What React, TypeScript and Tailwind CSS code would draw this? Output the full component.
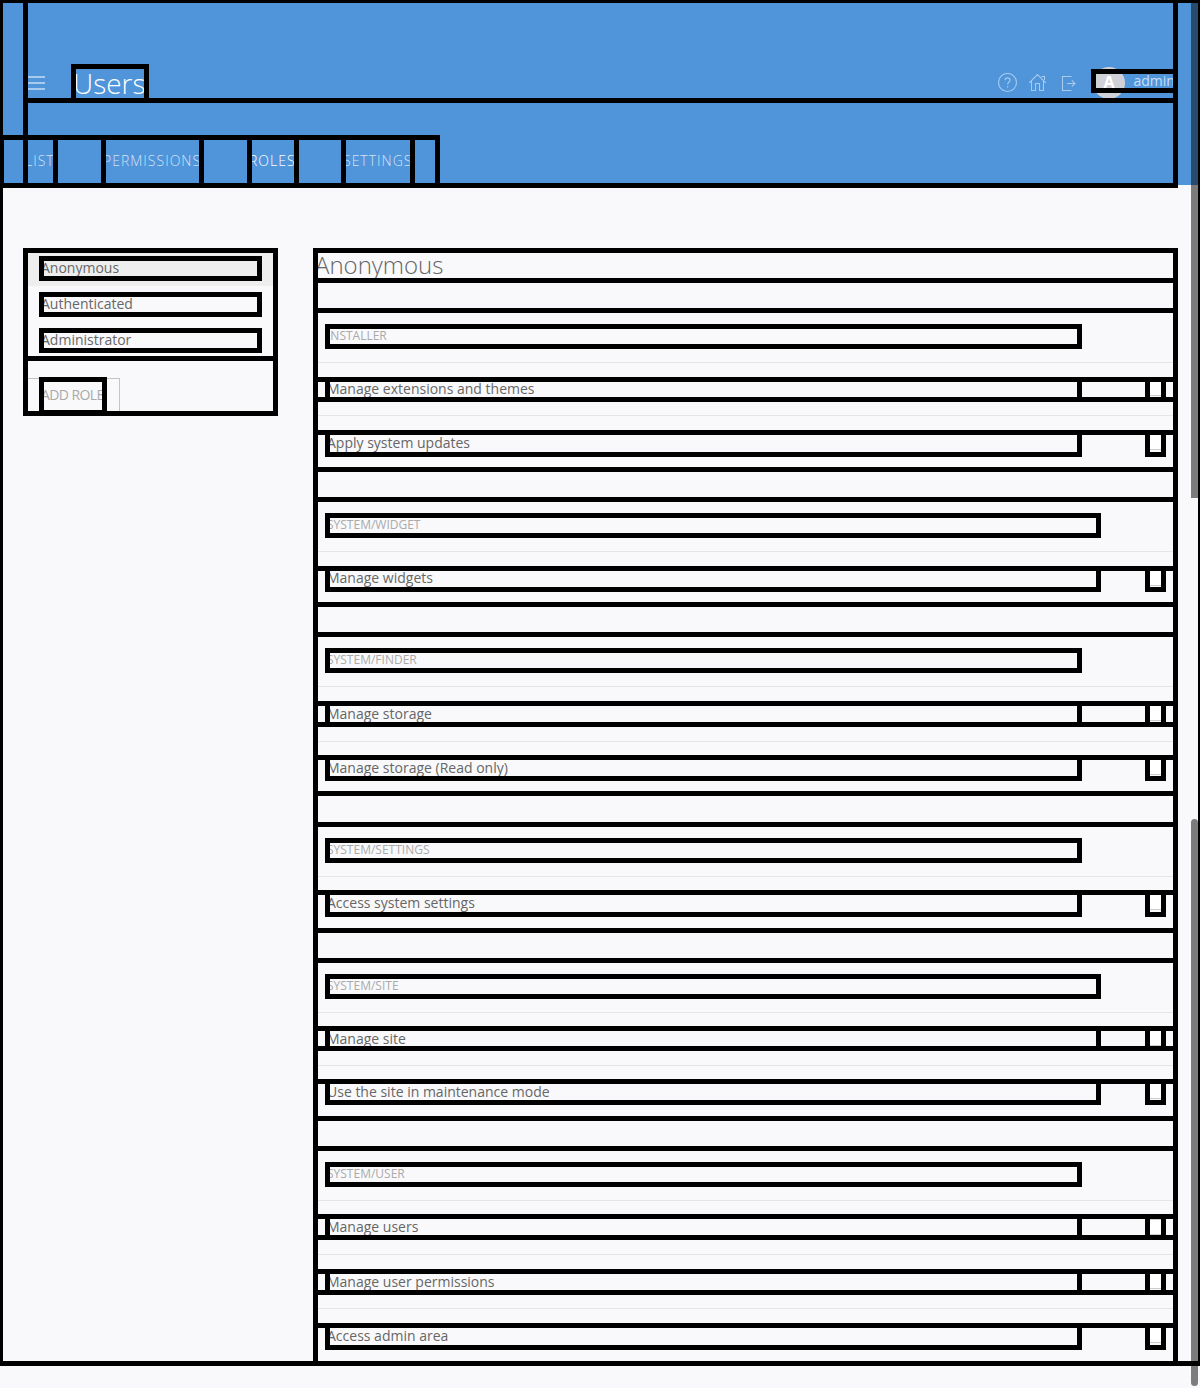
import React from "react";

type Row = { label: string; cls: string; box: string };
type Section = { title: string; head: string; rows: Row[]; gap: string };

const SECTIONS: Section[] = [
  {
    title: "INSTALLER",
    head: "h-[52px]",
    gap: "h-[30px]",
    rows: [
      { label: "Manage extensions and themes", cls: "h-[53px] pt-4", box: "mt-[1px]" },
      { label: "Apply system updates", cls: "h-[55px] pt-[17px]", box: "mt-[1px]" },
    ],
  },
  {
    title: "SYSTEM/WIDGET",
    head: "h-[51px]",
    gap: "h-[30px]",
    rows: [{ label: "Manage widgets", cls: "h-[54px] pt-4", box: "mt-[2px]" }],
  },
  {
    title: "SYSTEM/FINDER",
    head: "h-[51px]",
    gap: "h-[30px]",
    rows: [
      { label: "Manage storage", cls: "h-[55px] pt-[17px]", box: "mt-[1px]" },
      { label: "Manage storage (Read only)", cls: "h-[53px] pt-4", box: "mt-[1px]" },
    ],
  },
  {
    title: "SYSTEM/SETTINGS",
    head: "h-[52px]",
    gap: "h-[30px]",
    rows: [{ label: "Access system settings", cls: "h-[54px] pt-4", box: "mt-[1px]" }],
  },
  {
    title: "SYSTEM/SITE",
    head: "h-[52px]",
    gap: "h-[30px]",
    rows: [
      { label: "Manage site", cls: "h-[53px] pt-4", box: "mt-[1px]" },
      { label: "Use the site in maintenance mode", cls: "h-[53px] pt-4", box: "mt-[1px]" },
    ],
  },
  {
    title: "SYSTEM/USER",
    head: "h-[52px]",
    gap: "h-0",
    rows: [
      { label: "Manage users", cls: "h-[54px] pt-4", box: "mt-[2px]" },
      { label: "Manage user permissions", cls: "h-[54px] pt-[17px]", box: "mt-[1px]" },
      { label: "Access admin area", cls: "h-[56px] pt-[17px]", box: "mt-[1px]" },
    ],
  },
];

// Outline rectangles laid over the page: left, top, right, bottom (outer edges).
const OUTLINES: [number, number, number, number][] = [
  [-2, -2, 1203, 1366],
  [23, -2, 1178, 103],
  [23, 98, 1178, 188],
  [71, 64, 149, 103],
  [1091, 69, 1178, 93],
  [-1, 135, 440, 188],
  [23, 135, 58, 188],
  [101, 135, 204, 188],
  [247, 135, 299, 188],
  [341, 135, 415, 188],
  [23, 248, 278, 361],
  [23, 356, 278, 416],
  [39, 256, 262, 281],
  [39, 292, 262, 317],
  [39, 328, 262, 353],
  [39, 377, 107, 415],
  [313, 248, 1178, 283],
  [313, 278, 1178, 313],
  [313, 308, 1178, 382],
  [313, 377, 1178, 402],
  [313, 397, 1178, 435],
  [313, 430, 1178, 472],
  [313, 467, 1178, 502],
  [313, 497, 1178, 571],
  [313, 566, 1178, 607],
  [313, 602, 1178, 637],
  [313, 632, 1178, 706],
  [313, 701, 1178, 727],
  [313, 722, 1178, 760],
  [313, 755, 1178, 796],
  [313, 791, 1178, 827],
  [313, 822, 1178, 895],
  [313, 890, 1178, 933],
  [313, 928, 1178, 963],
  [313, 958, 1178, 1031],
  [313, 1026, 1178, 1051],
  [313, 1046, 1178, 1084],
  [313, 1079, 1178, 1121],
  [313, 1116, 1178, 1151],
  [313, 1146, 1178, 1219],
  [313, 1214, 1178, 1240],
  [313, 1235, 1178, 1274],
  [313, 1269, 1178, 1295],
  [313, 1290, 1178, 1328],
  [313, 1323, 1178, 1366],
  [325, 324, 1082, 349],
  [325, 513, 1101, 538],
  [325, 648, 1082, 673],
  [325, 838, 1082, 863],
  [325, 974, 1101, 999],
  [325, 1162, 1082, 1187],
  [325, 377, 1082, 402],
  [325, 430, 1082, 457],
  [325, 566, 1101, 592],
  [325, 701, 1082, 727],
  [325, 755, 1082, 781],
  [325, 890, 1082, 917],
  [325, 1026, 1101, 1051],
  [325, 1079, 1101, 1105],
  [325, 1214, 1082, 1240],
  [325, 1269, 1082, 1295],
  [325, 1323, 1082, 1350],
  [1145, 377, 1166, 402],
  [1145, 430, 1166, 457],
  [1145, 566, 1166, 592],
  [1145, 701, 1166, 727],
  [1145, 755, 1166, 781],
  [1145, 890, 1166, 917],
  [1145, 1026, 1166, 1051],
  [1145, 1079, 1166, 1105],
  [1145, 1214, 1166, 1240],
  [1145, 1269, 1166, 1295],
  [1145, 1323, 1166, 1350],
];

function Outlines() {
  return (
    <div className="pointer-events-none absolute inset-0 overflow-hidden" aria-hidden="true">
      {OUTLINES.map(([l, t, r, b], i) => (
        <div
          key={i}
          className="absolute border-[5px] border-black"
          style={{ left: l, top: t, width: r - l, height: b - t }}
        />
      ))}
    </div>
  );
}

function HeaderIcons() {
  return (
    <div className="flex h-5 items-center text-white/50">
      <svg width="20" height="20" viewBox="0 0 20 20" fill="none" stroke="currentColor" strokeWidth="1.1">
        <circle cx="9.5" cy="9.5" r="9" />
        <path d="M7.200 7.200c0-1.500 1-2.300 2.400-2.300s2.500.8 2.500 2.100c0 2-2.500 2-2.500 4.500" />
        <path d="M9.600 13v1.500" />
      </svg>
      <svg className="ml-[10px]" width="20" height="20" viewBox="0 0 20 20" fill="none" stroke="currentColor" strokeWidth="1.1">
        <path d="M1.200 9.800 9.500 1.500l8.300 8.300" />
        <path d="M3.500 8v9.500h4v-7h4v7h4V8" />
        <path d="M13.500 3.500h3v3.500" />
      </svg>
      <svg className="ml-[11px]" width="20" height="20" viewBox="0 0 20 20" fill="none" stroke="currentColor" strokeWidth="1.1">
        <path d="M12.500 3.500h-9v14h9" />
        <path d="M8 10.500h8M12.800 7.300l3.200 3.200-3.200 3.200" />
      </svg>
    </div>
  );
}

export default function App() {
  return (
    <div className="relative h-[1388px] w-[1200px] overflow-hidden bg-[#f9f9fb] font-['Open_Sans',sans-serif] text-sm leading-5 text-[#666]">
      <header className="flex h-[185px] flex-col bg-[#5094da]">
        <div className="flex h-[135px] items-start px-[25px] pt-[63px]">
          <svg className="mt-[10px] text-white/50" width="20" height="20" viewBox="0 0 20 20" fill="currentColor">
            <path d="M0 3h20v2H0zM0 9h20v2H0zM0 15h20v2H0z" />
          </svg>
          <h1 className="ml-[28px] text-[28px] font-light leading-10 text-white">Users</h1>
          <div className="ml-auto mr-[14px] mt-[10px]">
            <HeaderIcons />
          </div>
          <div className="flex w-[82px] items-start pt-[4px]">
            <div className="flex h-8 w-8 shrink-0 items-center justify-center rounded-full bg-[#d0d0d7] pb-[2px] text-[16px] font-bold text-white">
              A
            </div>
            <span className="ml-[8.5px] mt-1 whitespace-nowrap text-white/70">admin</span>
          </div>
        </div>
        <nav className="flex gap-[48px] pl-[25px] pt-4 font-light tracking-[1px] text-white/75">
          <span className="w-[30px]">LIST</span>
          <span className="w-[98px]">PERMISSIONS</span>
          <span className="w-[46px] text-white">ROLES</span>
          <span className="w-[70px]">SETTINGS</span>
        </nav>
      </header>

      <main className="flex px-[25px] pt-[65px]">
        <aside className="mr-[40px] w-[250px] shrink-0">
          <ul>
            <li className="h-9 bg-[#eee] px-4 py-2">Anonymous</li>
            <li className="h-9 px-4 py-2">Authenticated</li>
            <li className="h-9 px-4 py-2">Administrator</li>
          </ul>
          <button className="mt-5 h-[35px] w-[95px] whitespace-nowrap border border-[#c4c4c4] pb-[2px] pl-[15px] text-left text-[14px] tracking-[-0.6px] text-[#aaa]">
            ADD ROLE
          </button>
        </aside>

        <section className="min-w-0 flex-1">
          <h2 className="h-[60px] text-2xl font-light leading-[30px] text-[#666]">Anonymous</h2>
          {SECTIONS.map((s) => (
            <div key={s.title}>
              <div className={"flex items-end px-3 pb-[17px] text-xs leading-[18px] text-[#aaa] " + s.head}>
                {s.title}
              </div>
              {s.rows.map((r) => (
                <div key={r.label} className={"flex items-start justify-between border-t border-[#e5e5e5] pl-3 pr-[12px] " + r.cls}>
                  <span>{r.label}</span>
                  <span className={"h-4 w-4 border border-[#ccc] bg-white " + r.box} />
                </div>
              ))}
              <div className={s.gap} />
            </div>
          ))}
        </section>
      </main>

      <div className="absolute right-[2px] top-0 h-[498px] w-[7px] bg-black/50" />
      <div className="absolute right-[2px] top-[819px] h-[567px] w-[7px] rounded-full bg-black/50" />
      <Outlines />
    </div>
  );
}
